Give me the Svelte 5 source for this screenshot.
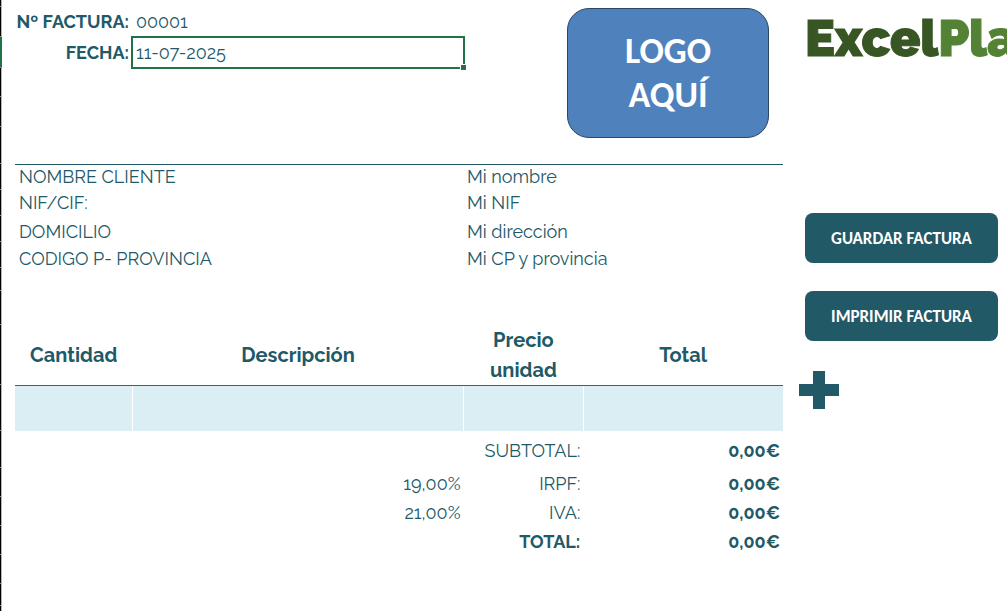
<script>
let invoice = $state({ number: '00001', date: '11-07-2025' })

const rowHeads = [7, 30, 31, 29, 30, 37, 26, 26, 26, 26, 23, 34, 60, 46, 37, 29, 29, 29, 29, 22]
const selectedRow = 2

const parties = [
	['NOMBRE CLIENTE', 'Mi nombre'],
	['NIF/CIF:', 'Mi NIF'],
	['DOMICILIO', 'Mi dirección'],
	['CODIGO P- PROVINCIA', 'Mi CP y provincia']
]

const totals = [
	{ label: 'SUBTOTAL:', rate: '', amount: '0,00€' },
	{ label: 'IRPF:', rate: '19,00%', amount: '0,00€' },
	{ label: 'IVA:', rate: '21,00%', amount: '0,00€' },
	{ label: 'TOTAL:', rate: '', amount: '0,00€', strong: true }
]
</script>

<div class="page">
	<div class="row-heads" aria-hidden="true">
		{#each rowHeads as height, i}
			<div class="row-head" class:selected={i === selectedRow} style:height="{height}px"></div>
		{/each}
	</div>

	<main class="sheet">
		<header class="header">
			<div class="fields">
				<label for="number">Nº FACTURA:</label>
				<input id="number" type="text" bind:value={invoice.number} />
				<label for="date">FECHA:</label>
				<div class="active-cell">
					<input id="date" type="text" bind:value={invoice.date} />
				</div>
			</div>
			<div class="logo">LOGO<br />AQUÍ</div>
		</header>

		<section class="parties">
			{#each parties as [client, own]}
				<div>{client}</div>
				<div>{own}</div>
			{/each}
		</section>

		<table>
			<colgroup>
				<col class="quantity" />
				<col class="description" />
				<col class="price" />
				<col class="total" />
			</colgroup>
			<thead>
				<tr>
					<th>Cantidad</th>
					<th>Descripción</th>
					<th>Precio<br />unidad</th>
					<th>Total</th>
				</tr>
			</thead>
			<tbody>
				<tr>
					<td></td>
					<td></td>
					<td></td>
					<td></td>
				</tr>
			</tbody>
			<tfoot>
				{#each totals as row}
					<tr class:strong={row.strong}>
						<td colspan="2">{row.rate}</td>
						<td>{row.label}</td>
						<td class="amount">{row.amount}</td>
					</tr>
				{/each}
			</tfoot>
		</table>
	</main>

	<aside class="side">
		<div class="brand">Excel<span>Pla</span></div>
		<div class="actions">
			<button class="button" type="button">GUARDAR FACTURA</button>
			<button class="button" type="button">IMPRIMIR FACTURA</button>
		</div>
		<button class="add" type="button" aria-label="Añadir línea">
			<svg viewBox="0 0 40 38" width="40" height="38">
				<path d="M14 0h12v13h14v12H26v13H14V25H0V13h14z" fill="currentColor" />
			</svg>
		</button>
	</aside>
</div>

<style>
:global(body) {
	margin: 0;
	background: #fff;
}

.page {
	--teal: #215967;
	--green: #217346;

	display: flex;
	min-height: 100vh;
	overflow: hidden;
	color: var(--teal);
	font-family: Raleway, Lato, sans-serif;
	font-size: 18px;
	font-variant-numeric: oldstyle-nums;
	line-height: 24px;
}

.row-heads {
	flex: none;
	width: 1px;
	background: #000;
	border-right: 1px solid #b5b5b5;
}

.row-head {
	box-sizing: border-box;
	border-bottom: 1px solid #8a8a8a;

	&.selected {
		width: 2px;
		background: var(--green);
	}
}

.sheet {
	flex: 1;
	min-width: 0;
	padding-left: 13px;
}

.header {
	display: flex;
	justify-content: space-between;
	box-sizing: border-box;
	height: 165px;
	padding: 8px 14px 0 0;
	border-bottom: 1px solid var(--teal);
}

.fields {
	display: grid;
	grid-template-columns: 114px 334px;
	grid-template-rows: 28px 33px;
	column-gap: 2px;
	align-items: center;
	align-content: start;

	label {
		font-weight: 700;
		text-align: right;
		white-space: nowrap;
		justify-self: end;
	}
}

input {
	box-sizing: border-box;
	width: 100%;
	padding: 0 5px;
	border: 0;
	outline: 0;
	background: none;
	color: inherit;
	font: inherit;
}

.active-cell {
	position: relative;
	border: 2px solid var(--green);

	input {
		display: block;
		height: 29px;
		padding: 0 3px;
	}

	&::after {
		position: absolute;
		right: -4px;
		bottom: -4px;
		width: 5px;
		height: 5px;
		border: 1px solid #fff;
		background: var(--green);
		content: '';
	}
}

.logo {
	display: flex;
	align-items: center;
	justify-content: center;
	box-sizing: border-box;
	width: 202px;
	height: 130px;
	border: 1px solid #2b4568;
	border-radius: 22px;
	background: #4f81bd;
	color: #fff;
	font-family: Calibri, Carlito, 'Open Sans', sans-serif;
	font-size: 36px;
	font-weight: 700;
	line-height: 44px;
	text-align: center;
}

.parties {
	display: grid;
	grid-template-columns: 448fr 320fr;
	grid-template-rows: 24px 28px 30px 24px;
	align-items: center;
	padding-bottom: 51px;

	div {
		padding-left: 4px;
	}
}

table {
	width: 100%;
	border-collapse: collapse;
	table-layout: fixed;
}

.quantity {
	width: 15.3%;
}

.description {
	width: 43.1%;
}

.price {
	width: 15.6%;
}

.total {
	width: 26%;
}

th {
	padding: 3px 0 0;
	border-bottom: 1px solid #3b6e2f;
	font-size: 20px;
	font-weight: 700;
	line-height: 30px;
}

tbody td {
	height: 45px;
	padding: 0;
	background: #daeef3;

	& + td {
		border-left: 1px solid #fff;
	}
}

tfoot td {
	height: 27px;
	padding: 2px 3px 0;
	text-align: right;
}

tfoot tr:first-child td {
	height: 35px;
}

.amount {
	font-weight: 700;
}

.strong {
	font-weight: 700;
}

.side {
	flex: none;
	box-sizing: border-box;
	width: 224px;
	padding: 8px 9px 0 16px;
}

.brand {
	height: 205px;
	margin-left: 6px;
	color: #375623;
	font-family: Raleway, Lato, sans-serif;
	font-size: 50px;
	font-weight: 900;
	line-height: 62px;
	white-space: nowrap;
	-webkit-text-stroke: 1px currentColor;

	span {
		color: #548235;
	}
}

.actions {
	display: grid;
	gap: 28px;
	margin-left: 6px;
}

.button {
	height: 50px;
	padding: 0;
	border: 0;
	border-radius: 8px;
	background: var(--teal);
	color: #fff;
	font-family: Calibri, Carlito, 'Open Sans', sans-serif;
	font-size: 17px;
	font-weight: 700;
}

.add {
	display: block;
	margin-top: 30px;
	padding: 0;
	border: 0;
	background: none;
	color: var(--teal);

	svg {
		display: block;
	}
}
</style>
